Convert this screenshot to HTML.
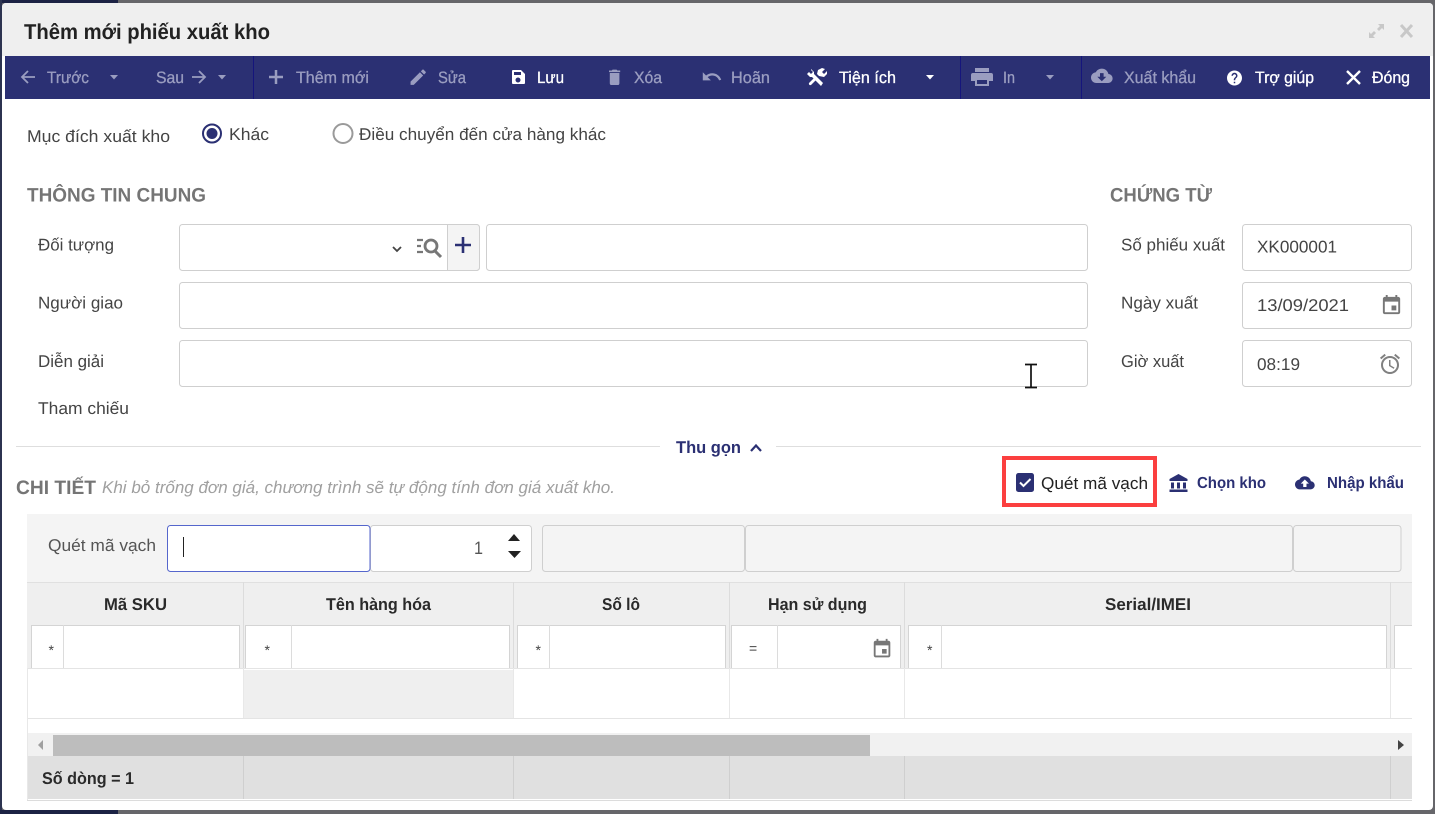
<!DOCTYPE html>
<html lang="vi"><head><meta charset="utf-8"><title>Thêm mới phiếu xuất kho</title>
<style>
html,body{margin:0;padding:0;width:1435px;height:814px;overflow:hidden;background:#5a5a5e}
svg{display:block;font-family:"Liberation Sans",Arial,sans-serif;filter:blur(.3px)}
text{text-rendering:geometricPrecision}
.l{font-size:17px;fill:#444}
.t{font-size:16.500px;stroke-width:.3px}
.d{fill:#9a9dc0;stroke:#9a9dc0}.w{fill:#fff;stroke:#fff}
.h{font-size:17px;font-weight:bold;fill:#2a2a2a}
.n{fill:#2b3073}
.b{fill:#fff;stroke:#cfcfcf;stroke-width:1}
.g{fill:#f4f4f4;stroke:#cfcfcf;stroke-width:1}
.f{fill:#fff;stroke:#d4d4d4;stroke-width:1}
.c{stroke:#dcdcdc;stroke-width:1;fill:none}
</style></head><body>
<svg width="1435" height="814" viewBox="0 0 1435 814" xmlns="http://www.w3.org/2000/svg">
<rect width="1435" height="814" fill="#66666a"/>
<rect width="118" height="3" fill="#1c2244"/>
<rect y="0" width="2" height="814" fill="#2c3350"/>
<rect y="810" width="118" height="4" fill="#1c2244"/>
<rect x="2" y="3" width="1431" height="807" rx="4" fill="#fff"/>
<path d="M2 7a4 4 0 0 1 4-4h1423a4 4 0 0 1 4 4v49H2z" fill="#efefef"/>
<text x="24" y="39" font-size="21.500" font-weight="bold" fill="#222" textLength="246" lengthAdjust="spacingAndGlyphs">Thêm mới phiếu xuất kho</text>
<path d="M1369 38v-6l2 2 3-3 2 2-3 3 2 2zM1384 24v6l-2-2-3 3-2-2 3-3-2-2z" fill="#c8c8c8"/>
<path d="M1401 25l11 12M1412 25l-11 12" stroke="#c8c8c8" stroke-width="3" fill="none"/>

<rect x="5" y="56" width="1425" height="43" fill="#2b3073"/>
<rect x="253" y="56" width="1" height="43" fill="#15157c"/>
<rect x="960" y="56" width="1" height="43" fill="#15157c"/>
<rect x="1081" y="56" width="1" height="43" fill="#15157c"/>

<path d="M35 77H22M28 71l-6 6 6 6" fill="none" stroke="#9a9dc0" stroke-width="1.800"/>
<text class="t d" x="47" y="83" textLength="42" lengthAdjust="spacingAndGlyphs">Trước</text>
<path d="M110 75h8l-4 4.500z" fill="#9a9dc0"/>
<text class="t d" x="156" y="83" textLength="28" lengthAdjust="spacingAndGlyphs">Sau</text>
<path d="M192 77h13M199 71l6 6-6 6" fill="none" stroke="#9a9dc0" stroke-width="1.800"/>
<path d="M218 75h8l-4 4.500z" fill="#9a9dc0"/>
<path d="M276 70v14M269 77h14" stroke="#9a9dc0" stroke-width="2.500" fill="none"/>
<text class="t d" x="296" y="83" textLength="73" lengthAdjust="spacingAndGlyphs">Thêm mới</text>
<path transform="translate(408,67) scale(.85)" d="M3 17.250V21h3.750L17.810 9.940l-3.750-3.750L3 17.250zM20.710 7.040c.39-.39.39-1.020 0-1.410l-2.340-2.340c-.39-.39-1.020-.39-1.410 0l-1.830 1.830 3.750 3.750 1.830-1.830z" fill="#9a9dc0"/>
<text class="t d" x="438" y="83" textLength="28" lengthAdjust="spacingAndGlyphs">Sửa</text>
<path d="M513 70h8l4 4v9a1 1 0 0 1-1 1h-11a1 1 0 0 1-1-1V71a1 1 0 0 1 1-1zM514 72v3h7v-3zM518 77.500a2.500 2.500 0 1 0 .01 0z" fill="#fff" fill-rule="evenodd"/>
<text class="t w" x="537" y="83" textLength="27" lengthAdjust="spacingAndGlyphs">Lưu</text>
<path transform="translate(605,67) scale(.8,.86)" d="M6 19c0 1.100.9 2 2 2h8c1.100 0 2-.9 2-2V7H6v12zM19 4h-3.500l-1-1h-5l-1 1H5v2h14V4z" fill="#9a9dc0"/>
<text class="t d" x="634" y="83" textLength="28" lengthAdjust="spacingAndGlyphs">Xóa</text>
<path transform="translate(701,66) scale(.9)" d="M12.500 8c-2.650 0-5.050.99-6.900 2.600L2 7v9h9l-3.620-3.620c1.390-1.160 3.160-1.880 5.120-1.880 3.540 0 6.550 2.310 7.600 5.500l2.370-.78C21.080 11.030 17.150 8 12.500 8z" fill="#9a9dc0"/>
<text class="t d" x="731" y="83" textLength="39" lengthAdjust="spacingAndGlyphs">Hoãn</text>
<path d="M811 69l3 3 0 2 9 9-2 3-9-9-2 0-3-3 2-2 2 2 2-2-2-2zM809 83l6-6 2 2-6 6a1.500 1.500 0 0 1-2-2zM819 76l-2-2 1-4 4-2 3 1-3 3 2 2 3-3 0 3-3 3z" fill="#fff"/>
<text class="t w" x="839" y="83" textLength="57" lengthAdjust="spacingAndGlyphs">Tiện ích</text>
<path d="M926 75h8l-4 4.500z" fill="#fff"/>
<path d="M975 68h14v4h-14zM973 73h18a2 2 0 0 1 2 2v6h-4v5h-14v-5h-4v-6a2 2 0 0 1 2-2zM977 80v4h10v-4z" fill="#9a9dc0" fill-rule="evenodd"/>
<text class="t d" x="1003" y="83" textLength="12" lengthAdjust="spacingAndGlyphs">In</text>
<path d="M1046 75h8l-4 4.500z" fill="#9a9dc0"/>
<path transform="translate(1091,65) scale(.9)" d="M19.350 10.040C18.670 6.590 15.640 4 12 4 9.110 4 6.600 5.640 5.350 8.040 2.340 8.360 0 10.910 0 14c0 3.310 2.690 6 6 6h13c2.760 0 5-2.240 5-5 0-2.640-2.050-4.780-4.650-4.960zM17 13l-5 5-5-5h3V9h4v4h3z" fill="#9a9dc0"/>
<text class="t d" x="1124" y="83" textLength="72" lengthAdjust="spacingAndGlyphs">Xuất khẩu</text>
<path transform="translate(1225.500,69) scale(.75)" d="M12 2C6.480 2 2 6.480 2 12s4.480 10 10 10 10-4.480 10-10S17.520 2 12 2zm1 17h-2v-2h2v2zm2.070-7.750l-.9.92C13.450 12.900 13 13.500 13 15h-2v-.5c0-1.100.45-2.100 1.170-2.830l1.240-1.260c.37-.36.59-.86.59-1.410 0-1.100-.9-2-2-2s-2 .9-2 2H8c0-2.210 1.790-4 4-4s4 1.790 4 4c0 .88-.36 1.680-.93 2.250z" fill="#fff"/>
<text class="t w" x="1255" y="83" textLength="59" lengthAdjust="spacingAndGlyphs">Trợ giúp</text>
<path d="M1347 71l13 13M1360 71l-13 13" stroke="#fff" stroke-width="2.400" fill="none"/>
<text class="t w" x="1372" y="83" textLength="38" lengthAdjust="spacingAndGlyphs">Đóng</text>

<text class="l" x="27" y="142" textLength="143" lengthAdjust="spacingAndGlyphs">Mục đích xuất kho</text>
<circle cx="212" cy="133.500" r="9" fill="#fff" stroke="#2b3073" stroke-width="2"/>
<circle cx="212" cy="133.500" r="5.500" fill="#2b3073"/>
<text class="l" x="229" y="140" textLength="40" lengthAdjust="spacingAndGlyphs">Khác</text>
<circle cx="343" cy="133.500" r="9.500" fill="#fff" stroke="#9a9a9a" stroke-width="2"/>
<text class="l" x="359" y="140" textLength="247" lengthAdjust="spacingAndGlyphs">Điều chuyển đến cửa hàng khác</text>

<text x="27" y="201.500" font-size="19.500" font-weight="bold" fill="#757575" textLength="179" lengthAdjust="spacingAndGlyphs">THÔNG TIN CHUNG</text>
<text x="1110" y="201.500" font-size="19.500" font-weight="bold" fill="#757575" textLength="102" lengthAdjust="spacingAndGlyphs">CHỨNG TỪ</text>

<text class="l" x="38" y="250.500" textLength="76" lengthAdjust="spacingAndGlyphs">Đối tượng</text>
<text class="l" x="38" y="308.500" textLength="85" lengthAdjust="spacingAndGlyphs">Người giao</text>
<text class="l" x="38" y="367" textLength="66" lengthAdjust="spacingAndGlyphs">Diễn giải</text>
<text class="l" x="38" y="414" textLength="91" lengthAdjust="spacingAndGlyphs">Tham chiếu</text>

<rect class="b" x="179.500" y="224.500" width="300" height="46" rx="3"/>
<path d="M447.500 224.500h29a3 3 0 0 1 3 3v40a3 3 0 0 1-3 3h-29z" fill="#f4f4f4" stroke="#cfcfcf"/>
<path d="M393 247l4 4 4-4" fill="none" stroke="#444" stroke-width="1.800"/>
<path d="M417 240h6M417 246h4M417 252h6" stroke="#777" stroke-width="2.200" fill="none"/>
<circle cx="431" cy="246" r="6" fill="none" stroke="#777" stroke-width="2.800"/>
<path d="M435 251l6 6" stroke="#777" stroke-width="3" fill="none"/>
<path d="M463 237v16M455 245h16" stroke="#2b3073" stroke-width="2.600" fill="none"/>
<rect class="b" x="486.500" y="224.500" width="601" height="46" rx="3"/>
<rect class="b" x="179.500" y="282.500" width="908" height="46" rx="3"/>
<rect class="b" x="179.500" y="340.500" width="908" height="46" rx="3"/>
<path d="M1025 364.500h12M1025 387.500h12M1031 365v22" stroke="#111" stroke-width="1.700" fill="none"/>

<text class="l" x="1121" y="250.500" textLength="104" lengthAdjust="spacingAndGlyphs">Số phiếu xuất</text>
<text class="l" x="1121" y="308.500" textLength="77" lengthAdjust="spacingAndGlyphs">Ngày xuất</text>
<text class="l" x="1121" y="367" textLength="63" lengthAdjust="spacingAndGlyphs">Giờ xuất</text>
<rect class="b" x="1242.500" y="224.500" width="169" height="46" rx="3"/>
<rect class="b" x="1242.500" y="282.500" width="169" height="46" rx="3"/>
<rect class="b" x="1242.500" y="340.500" width="169" height="46" rx="3"/>
<text class="l" x="1257" y="252.500" textLength="80" lengthAdjust="spacingAndGlyphs">XK000001</text>
<text class="l" x="1257" y="311" textLength="92" lengthAdjust="spacingAndGlyphs">13/09/2021</text>
<text class="l" x="1257" y="370" textLength="43" lengthAdjust="spacingAndGlyphs">08:19</text>
<path transform="translate(1380,294) scale(.96)" d="M17 12h-5v5h5v-5zM16 1v2H8V1H6v2H5c-1.110 0-1.990.9-1.990 2L3 19c0 1.100.89 2 2 2h14c1.100 0 2-.9 2-2V5c0-1.100-.9-2-2-2h-1V1h-2zm3 18H5V8h14v11z" fill="#777"/>
<path transform="translate(1378,352) scale(1)" d="M22 5.720l-4.600-3.860-1.290 1.530 4.600 3.860L22 5.720zM7.880 3.390L6.600 1.860 2 5.710l1.290 1.530 4.590-3.850zM12.500 8H11v6l4.750 2.850.75-1.230-4-2.370V8zM12 4c-4.970 0-9 4.030-9 9s4.030 9 9 9 9-4.030 9-9-4.030-9-9-9zm0 16c-3.870 0-7-3.130-7-7s3.130-7 7-7 7 3.130 7 7-3.130 7-7 7z" fill="#808080"/>

<rect x="16" y="446" width="1405" height="1" fill="#dedede"/>
<rect x="660" y="436" width="116" height="22" fill="#fff"/>
<text x="676" y="453" font-size="17" font-weight="bold" fill="#2b3073" textLength="65" lengthAdjust="spacingAndGlyphs">Thu gọn</text>
<path d="M751 451l5-5.500 5 5.500" fill="none" stroke="#2b3073" stroke-width="2.200"/>

<text x="16" y="494" font-size="19.500" font-weight="bold" fill="#757575" textLength="80" lengthAdjust="spacingAndGlyphs">CHI TIẾT</text>
<text x="102" y="493" font-size="17" font-style="italic" fill="#a0a0a0" textLength="513" lengthAdjust="spacingAndGlyphs">Khi bỏ trống đơn giá, chương trình sẽ tự động tính đơn giá xuất kho.</text>

<rect x="1004" y="458" width="151" height="47" fill="#fff" stroke="#fb3f3f" stroke-width="4"/>
<rect x="1016" y="473" width="18" height="19" rx="2.500" fill="#2b3073"/>
<path d="M1020 482.500l3.500 3.500 7-7" fill="none" stroke="#fff" stroke-width="2"/>
<text x="1041" y="489" font-size="17" fill="#222" textLength="107" lengthAdjust="spacingAndGlyphs">Quét mã vạch</text>
<path d="M1178.500 474l-9 5v2h18v-2zM1171 482.500h3v6h-3zM1177 482.500h3v6h-3zM1183 482.500h3v6h-3zM1169.500 489.500h18v2.500h-18z" fill="#2b3073"/>
<text x="1197" y="488" font-size="16" font-weight="bold" fill="#2b3073" textLength="69" lengthAdjust="spacingAndGlyphs">Chọn kho</text>
<path transform="translate(1295,473) scale(.82)" d="M19.350 10.040C18.670 6.590 15.640 4 12 4 9.110 4 6.600 5.640 5.350 8.040 2.340 8.360 0 10.910 0 14c0 3.310 2.690 6 6 6h13c2.760 0 5-2.240 5-5 0-2.640-2.050-4.780-4.650-4.960zM14 13v4h-4v-4H7l5-5 5 5h-3z" fill="#2b3073" fill-rule="evenodd"/>
<text x="1327" y="488" font-size="16" font-weight="bold" fill="#2b3073" textLength="77" lengthAdjust="spacingAndGlyphs">Nhập khẩu</text>

<rect x="27" y="514" width="1385" height="68" fill="#f4f4f4"/>
<text x="48" y="551" font-size="17" fill="#555" textLength="108" lengthAdjust="spacingAndGlyphs">Quét mã vạch</text>
<rect x="370.500" y="525.500" width="161" height="46" rx="3" class="b"/>
<rect x="167.500" y="525.500" width="202.500" height="46" rx="3" fill="#fff" stroke="#5566cc"/>
<rect x="183" y="537" width="1" height="20" fill="#222"/>
<text x="474" y="554" font-size="18" fill="#555" textLength="9" lengthAdjust="spacingAndGlyphs">1</text>
<path d="M508 541l6-7 6 7zM508 551h13l-6.500 7z" fill="#222"/>
<rect class="g" x="542.500" y="525.500" width="202" height="46" rx="3"/>
<rect class="g" x="745.500" y="525.500" width="547" height="46" rx="3"/>
<rect class="g" x="1293.500" y="525.500" width="107.500" height="46" rx="3"/>

<rect x="27" y="582" width="1385" height="87" fill="#efefef"/>
<rect x="27" y="582" width="1385" height="1" fill="#e0e0e0"/>
<path class="c" d="M243.500 582v86M513.500 582v86M729.500 582v86M904.500 582v86M1390.500 582v86"/>
<text class="h" x="104" y="610" textLength="63" lengthAdjust="spacingAndGlyphs">Mã SKU</text>
<text class="h" x="326" y="610" textLength="105" lengthAdjust="spacingAndGlyphs">Tên hàng hóa</text>
<text class="h" x="602" y="610" textLength="38" lengthAdjust="spacingAndGlyphs">Số lô</text>
<text class="h" x="768" y="610" textLength="99" lengthAdjust="spacingAndGlyphs">Hạn sử dụng</text>
<text class="h" x="1105" y="610" textLength="86" lengthAdjust="spacingAndGlyphs">Serial/IMEI</text>

<rect class="f" x="31.500" y="625.500" width="208" height="44"/><path class="c" d="M63.500 625v44"/>
<rect class="f" x="245.500" y="625.500" width="264" height="44"/><path class="c" d="M291.500 625v44"/>
<rect class="f" x="517.500" y="625.500" width="208" height="44"/><path class="c" d="M549.500 625v44"/>
<rect class="f" x="731.500" y="625.500" width="169" height="44"/><path class="c" d="M777.500 625v44"/>
<rect class="f" x="908.500" y="625.500" width="478" height="44"/><path class="c" d="M941.500 625v44"/>
<path d="M1412 625.500h-17.500v44h17.500" fill="#fff" stroke="#d4d4d4"/>
<g font-size="14" fill="#444">
<text x="48.500" y="655">*</text><text x="264.500" y="655">*</text><text x="535.500" y="655">*</text><text x="749" y="653">=</text><text x="927" y="655">*</text>
</g>
<path transform="translate(871,638) scale(.92)" d="M17 12h-5v5h5v-5zM16 1v2H8V1H6v2H5c-1.110 0-1.990.9-1.990 2L3 19c0 1.100.89 2 2 2h14c1.100 0 2-.9 2-2V5c0-1.100-.9-2-2-2h-1V1h-2zm3 18H5V8h14v11z" fill="#777"/>

<rect x="27" y="668" width="1385" height="50" fill="#fff"/>
<rect x="243" y="670" width="270" height="48" fill="#efefef"/>
<rect x="27" y="668" width="1385" height="1" fill="#e4e4e4"/>
<rect x="27" y="718" width="1385" height="1" fill="#e4e4e4"/>
<path d="M243.500 668v50M513.500 668v50M729.500 668v50M904.500 668v50M1390.500 668v50" stroke="#e8e8e8" fill="none"/>
<rect x="27" y="668" width="1" height="133" fill="#e8e8e8"/>

<rect x="28" y="733" width="1384" height="23" fill="#f1f1f1"/>
<rect x="53" y="735" width="817" height="21" fill="#bdbdbd"/>
<path d="M43 740v10l-5-5z" fill="#a0a0a0"/>
<path d="M1398 740v10l6-5z" fill="#444"/>

<rect x="28" y="756" width="1384" height="43" fill="#e0e0e0"/>
<rect x="27" y="800" width="1385" height="1" fill="#dcdcdc"/>
<path d="M243.500 756v43M513.500 756v43M729.500 756v43M904.500 756v43M1390.500 756v43" stroke="#cfcfcf" fill="none"/>
<text x="42" y="784" font-size="17" font-weight="bold" fill="#2a2a2a" textLength="92" lengthAdjust="spacingAndGlyphs">Số dòng = 1</text>
</svg>
</body></html>
